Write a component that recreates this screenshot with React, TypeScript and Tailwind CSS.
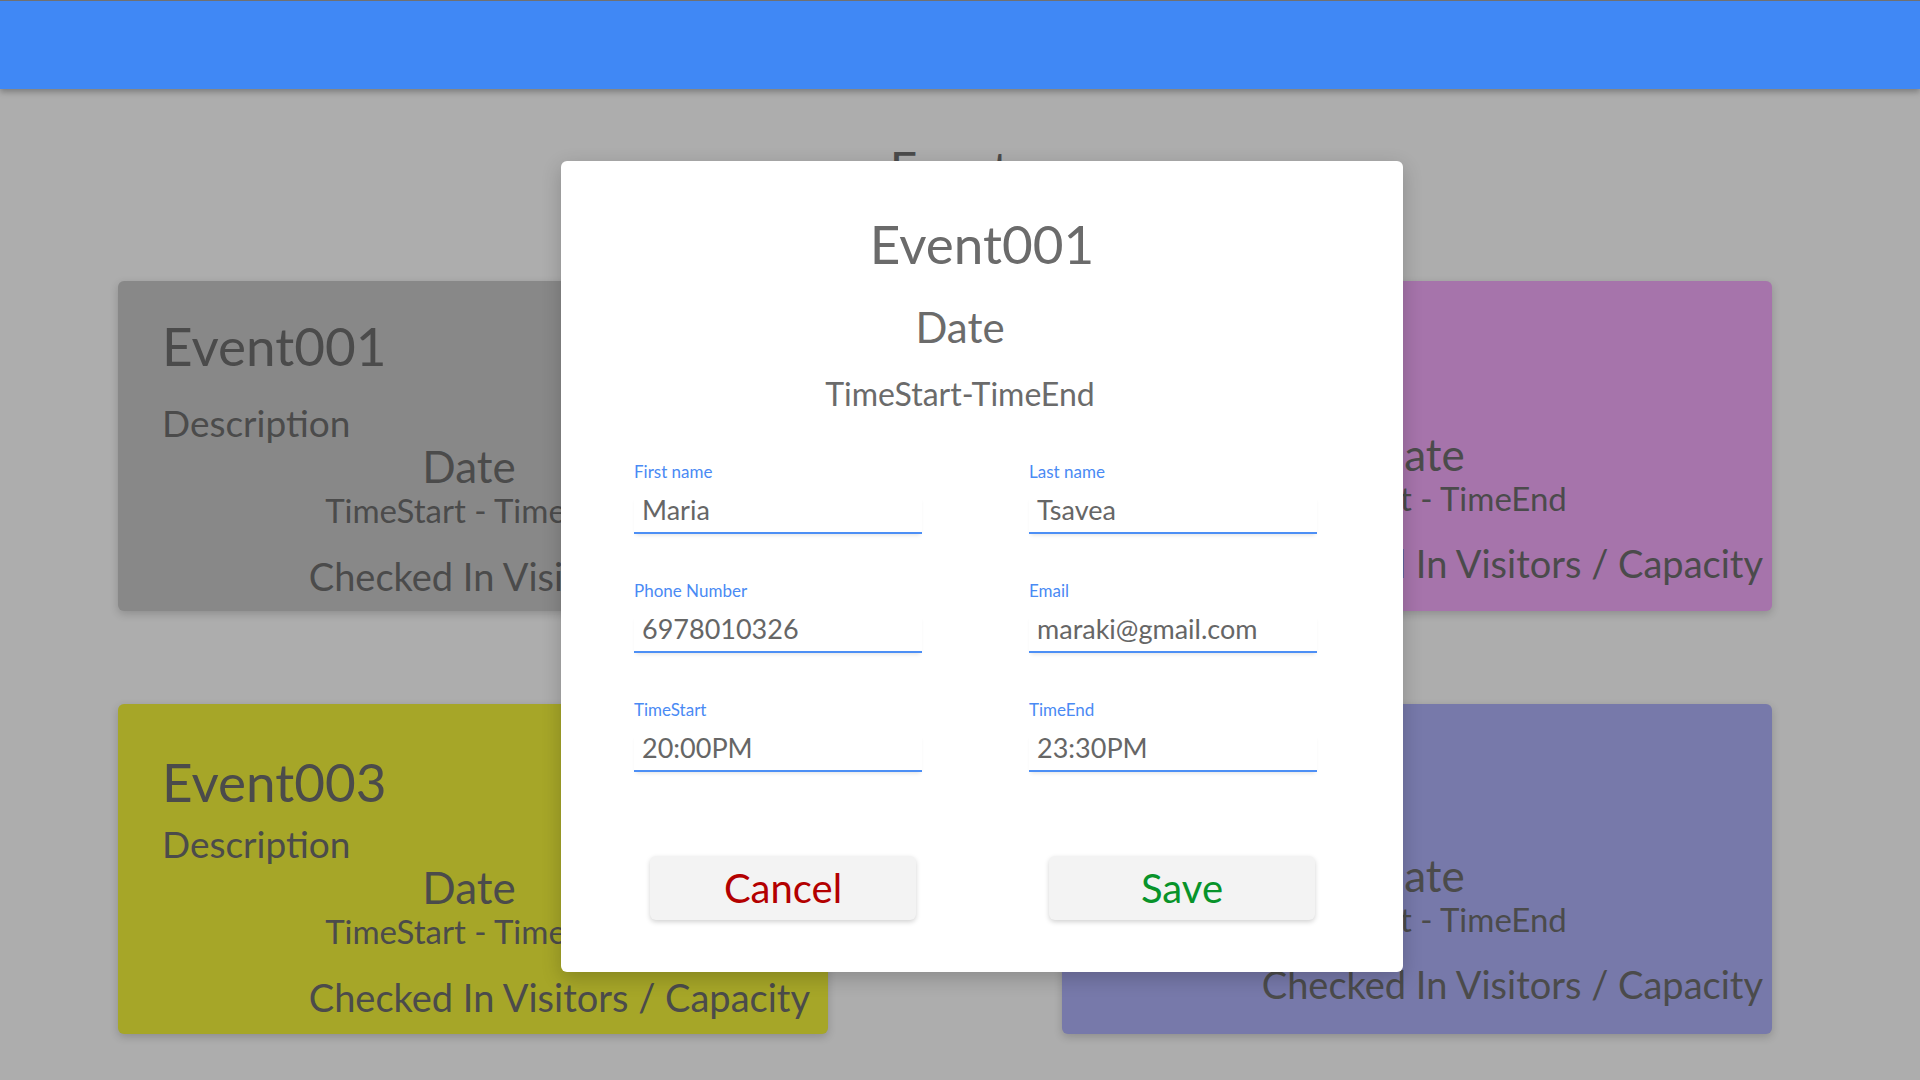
import React from "react"

type CardProps = {
  title: string
  bg: string
  titleTop: string
  right?: boolean
}

function EventCard({ title, bg, titleTop, right }: CardProps) {
  return (
    <div className={`h-[330px] rounded-md shadow-[0_3px_8px_rgba(0,0,0,0.18)] text-[#4b4b4b] ${bg}`}>
      <div className={`pl-[44px] text-[53px] leading-none ${titleTop}`}>{title}</div>
      <div className="pl-[44px] text-[37px] leading-none">Description</div>
      <div className={`text-center text-[44px] leading-none ${right ? "mt-[-9px] pl-[2px]" : "mt-[3px] pr-[8px]"}`}>Date</div>
      <div className={`text-center text-[33px] leading-none mt-[6px] ${right ? "pl-[4px]" : ""}`}>
        TimeStart - TimeEnd
      </div>
      <div className={`text-right text-[38px] leading-none ${right ? "mt-[29px] pr-[9px]" : "mt-[30px] pr-[18px]"}`}>
        Checked In Visitors / Capacity
      </div>
    </div>
  )
}

function Field({ label, value }: { label: string; value: string }) {
  return (
    <div className="flex flex-col">
      <span className="text-[17px] leading-none text-[#4a8af4]">{label}</span>
      <div className="mt-[16px] pl-2 pb-[9px] border-b-2 border-[#4d8ff5] shadow-[0_3px_4px_-2px_rgba(0,0,0,0.12)] text-[27px] leading-none text-[#666666]">
        {value}
      </div>
    </div>
  )
}

export default function App() {
  return (
    <div className="relative h-[1080px] w-[1920px] overflow-hidden bg-[#adadad] font-['Lato','Liberation_Sans',sans-serif]">
      <header className="relative z-10 h-[89px] bg-[#4088f5] border-t border-[#707070] shadow-[0_3px_6px_rgba(0,0,0,0.28)]" />

      <main>
        <h1 className="mt-[56px] text-center text-[48px] leading-none text-[#4b4b4b]">Events</h1>
        <div className="mt-[88px] grid grid-cols-[710px_710px] gap-x-[234px] gap-y-[93px] pl-[118px]">
          <EventCard title="Event001" bg="bg-[#888888]" titleTop="pt-[38px] pb-[32px]" />
          <EventCard title="Event002" bg="bg-[#a674ab]" titleTop="pt-[38px] pb-[32px]" right />
          <EventCard title="Event003" bg="bg-[#a6a628]" titleTop="pt-[51px] pb-[17px]" />
          <EventCard title="Event004" bg="bg-[#7779aa]" titleTop="pt-[51px] pb-[17px]" right />
        </div>
      </main>

      <div className="absolute left-[561px] top-[161px] z-20 flex h-[811px] w-[842px] flex-col rounded-md bg-white shadow-[0_6px_20px_rgba(0,0,0,0.2)] text-[#6b6b6b]">
        <h2 className="pt-[56px] text-center text-[53px] leading-none">Event001</h2>
        <div className="mt-[36px] pr-[44px] text-center text-[42px] leading-none">Date</div>
        <div className="mt-[30px] pr-[44px] text-center text-[32px] leading-none">TimeStart-TimeEnd</div>

        <div className="mt-[53px] grid grid-cols-[288px_288px] gap-x-[107px] gap-y-[48px] pl-[73px]">
          <Field label="First name" value="Maria" />
          <Field label="Last name" value="Tsavea" />
          <Field label="Phone Number" value="6978010326" />
          <Field label="Email" value="maraki@gmail.com" />
          <Field label="TimeStart" value="20:00PM" />
          <Field label="TimeEnd" value="23:30PM" />
        </div>

        <div className="mt-[84px] flex gap-[133px] pl-[89px]">
          <button className="h-[64px] w-[266px] rounded-md bg-[#f3f3f3] shadow-[0_2px_5px_rgba(0,0,0,0.18)] text-[40px] leading-none text-[#b30000]">
            Cancel
          </button>
          <button className="h-[64px] w-[266px] rounded-md bg-[#f3f3f3] shadow-[0_2px_5px_rgba(0,0,0,0.18)] text-[40px] leading-none text-[#08932a]">
            Save
          </button>
        </div>
      </div>
    </div>
  )
}
